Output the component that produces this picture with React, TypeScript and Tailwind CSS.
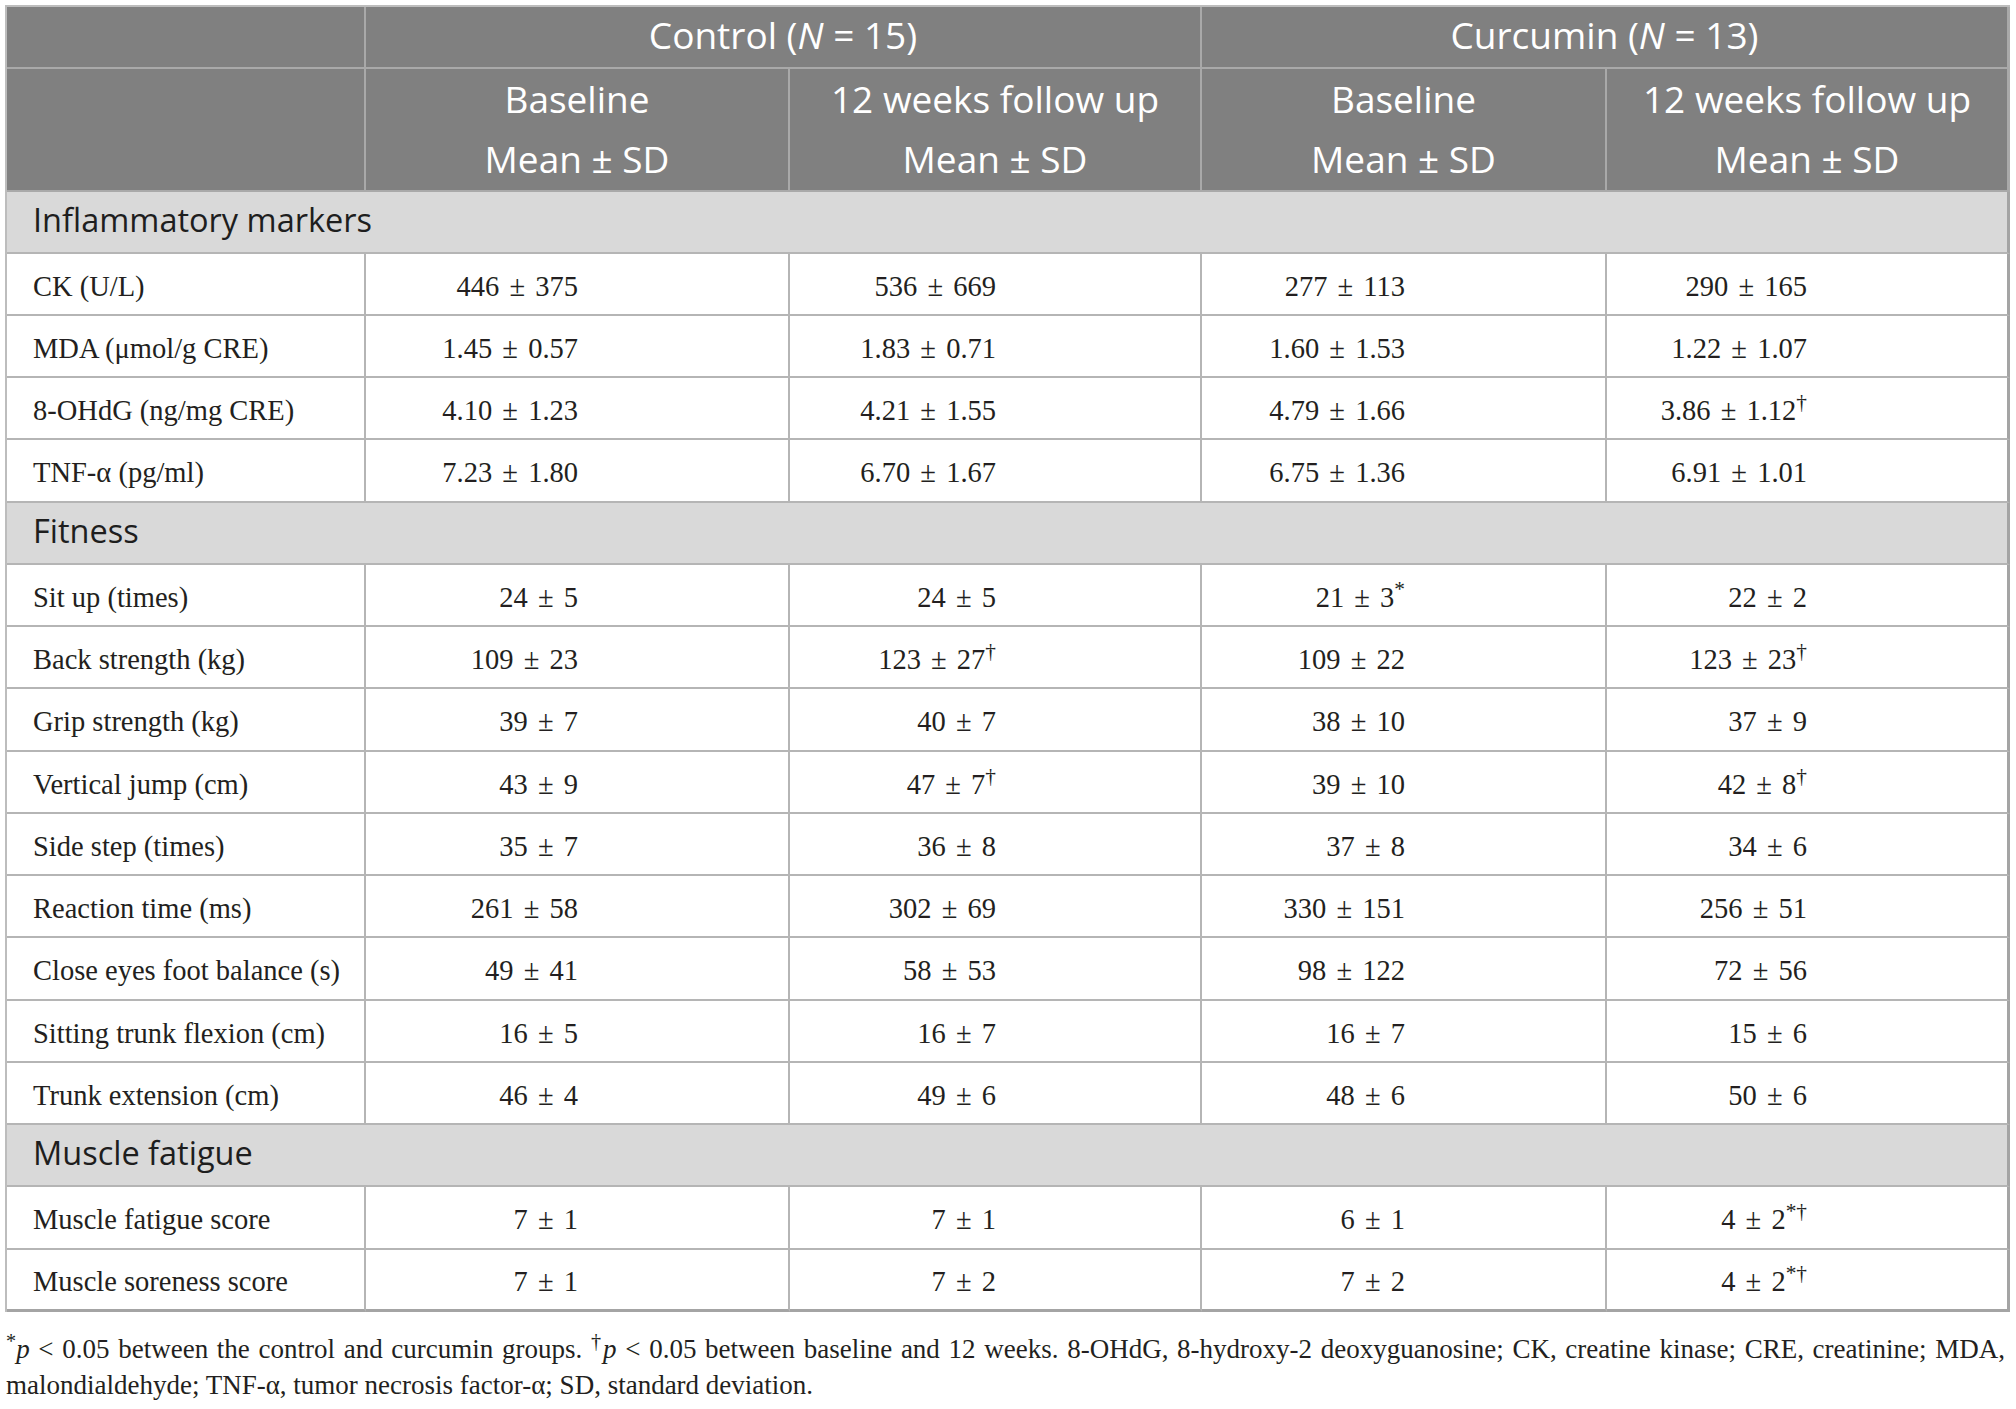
const SERIF = "font-['Liberation_Serif','Times_New_Roman',serif]";

type Row =
  | { kind: "section"; label: string }
  | { kind: "data"; label: string; values: string[]; marks?: string[] };

// value text is "a ± b"; the source's ± sits a touch wider than Times'
function Val({ text, mark }: { text: string; mark?: string }) {
  const [a, b] = text.split(" ± ");
  return (
    <>
      {a}
      <span className="mx-[3px]"> ± </span>
      {b}
      {mark && <sup>{mark}</sup>}
    </>
  );
}

const ROWS: Row[] = [
  { kind: "data", label: "CK (U/L)", values: ["446 ± 375", "536 ± 669", "277 ± 113", "290 ± 165"] },
  { kind: "data", label: "MDA (μmol/g CRE)", values: ["1.45 ± 0.57", "1.83 ± 0.71", "1.60 ± 1.53", "1.22 ± 1.07"] },
  { kind: "data", label: "8-OHdG (ng/mg CRE)", values: ["4.10 ± 1.23", "4.21 ± 1.55", "4.79 ± 1.66", "3.86 ± 1.12"], marks: ["", "", "", "†"] },
  { kind: "data", label: "TNF-α (pg/ml)", values: ["7.23 ± 1.80", "6.70 ± 1.67", "6.75 ± 1.36", "6.91 ± 1.01"] },
  { kind: "section", label: "Fitness" },
  { kind: "data", label: "Sit up (times)", values: ["24 ± 5", "24 ± 5", "21 ± 3", "22 ± 2"], marks: ["", "", "*", ""] },
  { kind: "data", label: "Back strength (kg)", values: ["109 ± 23", "123 ± 27", "109 ± 22", "123 ± 23"], marks: ["", "†", "", "†"] },
  { kind: "data", label: "Grip strength (kg)", values: ["39 ± 7", "40 ± 7", "38 ± 10", "37 ± 9"] },
  { kind: "data", label: "Vertical jump (cm)", values: ["43 ± 9", "47 ± 7", "39 ± 10", "42 ± 8"], marks: ["", "†", "", "†"] },
  { kind: "data", label: "Side step (times)", values: ["35 ± 7", "36 ± 8", "37 ± 8", "34 ± 6"] },
  { kind: "data", label: "Reaction time (ms)", values: ["261 ± 58", "302 ± 69", "330 ± 151", "256 ± 51"] },
  { kind: "data", label: "Close eyes foot balance (s)", values: ["49 ± 41", "58 ± 53", "98 ± 122", "72 ± 56"] },
  { kind: "data", label: "Sitting trunk flexion (cm)", values: ["16 ± 5", "16 ± 7", "16 ± 7", "15 ± 6"] },
  { kind: "data", label: "Trunk extension (cm)", values: ["46 ± 4", "49 ± 6", "48 ± 6", "50 ± 6"] },
  { kind: "section", label: "Muscle fatigue" },
  { kind: "data", label: "Muscle fatigue score", values: ["7 ± 1", "7 ± 1", "6 ± 1", "4 ± 2"], marks: ["", "", "", "*†"] },
  { kind: "data", label: "Muscle soreness score", values: ["7 ± 1", "7 ± 2", "7 ± 2", "4 ± 2"], marks: ["", "", "", "*†"] },
];

// rows sit ~62.24px apart in the source, so every fourth row gets the extra pixel
const HEIGHTS = ["h-[62px]", "h-[62px]", "h-[62px]", "h-[63px]"];

function ValueCell({ width, half, last, bottom, children }: { width: string; half: string; last?: boolean; bottom?: boolean; children: React.ReactNode }) {
  return (
    <div
      className={`${width} shrink-0 flex items-center pt-[6px] ${last ? "border-r-[3px] border-r-[#a4a4a4]" : "border-r-2 border-r-[#b5b5b5]"} ${bottom ? "border-b-[3px] border-b-[#a4a4a4]" : "border-b-2 border-b-[#b5b5b5]"}`}
    >
      <div className={`${half} text-right whitespace-nowrap`}>{children}</div>
    </div>
  );
}

export default function App() {
  return (
    <div className="bg-white min-h-[1409px] w-[2016px] pt-[5px] pl-[5px] text-[#231f20]">
      <div className="w-[2005px] border-l-2 border-t-2 border-[#bdbdbd]">
        {/* header */}
        <div className="bg-[#808080] text-white font-['Open_Sans',sans-serif] text-[37px]">
          <div className="flex h-[62px]">
            <div className="w-[359px] shrink-0 border-r-2 border-b-2 border-[#a9a9a9]" />
            <div className="w-[836px] shrink-0 border-r-2 border-b-2 border-[#a9a9a9] flex items-center justify-center pb-[4px]">
              <span>
                Control (<span className="italic">N</span> = 15)
              </span>
            </div>
            <div className="w-[808px] shrink-0 border-r-[3px] border-b-2 border-[#a9a9a9] flex items-center justify-center pb-[4px]">
              <span>
                Curcumin (<span className="italic">N</span> = 13)
              </span>
            </div>
          </div>
          <div className="flex h-[123px] leading-[60px] text-center">
            <div className="w-[359px] shrink-0 border-r-2 border-b-2 border-[#a9a9a9]" />
            <div className="w-[424px] shrink-0 border-r-2 border-b-2 border-[#a9a9a9]">
              <div>Baseline</div>
              <div>Mean ± SD</div>
            </div>
            <div className="w-[412px] shrink-0 border-r-2 border-b-2 border-[#a9a9a9]">
              <div>12 weeks follow up</div>
              <div>Mean ± SD</div>
            </div>
            <div className="w-[405px] shrink-0 border-r-2 border-b-2 border-[#a9a9a9]">
              <div>Baseline</div>
              <div>Mean ± SD</div>
            </div>
            <div className="w-[403px] shrink-0 border-r-[3px] border-b-2 border-[#a9a9a9]">
              <div>12 weeks follow up</div>
              <div>Mean ± SD</div>
            </div>
          </div>
        </div>

        <div className="h-[62px] bg-[#d9d9d9] border-b-2 border-r-[3px] border-b-[#b5b5b5] border-r-[#a4a4a4] flex items-center pl-[26px] pb-[3px] font-['Open_Sans',sans-serif] text-[32.5px] text-[#1e1e1e]">
          Inflammatory markers
        </div>

        {ROWS.map((row, i) => {
          const h = HEIGHTS[i % 4];
          const bottom = i === ROWS.length - 1;
          if (row.kind === "section") {
            return (
              <div
                key={row.label}
                className={`${h} bg-[#d9d9d9] border-b-2 border-r-[3px] border-b-[#b5b5b5] border-r-[#a4a4a4] flex items-center pl-[26px] pb-[3px] font-['Open_Sans',sans-serif] text-[32.5px] text-[#1e1e1e]`}
              >
                {row.label}
              </div>
            );
          }
          const m = row.marks ?? [];
          return (
            <div key={row.label} className={`flex ${h} ${SERIF} text-[28.5px]`}>
              <div
                className={`w-[359px] shrink-0 flex items-center pl-[26px] pt-[6px] border-r-2 border-r-[#b5b5b5] ${bottom ? "border-b-[3px] border-b-[#a4a4a4]" : "border-b-2 border-b-[#b5b5b5]"}`}
              >
                {row.label}
              </div>
              <ValueCell width="w-[424px]" half="w-[212px]" bottom={bottom}>
                <Val text={row.values[0]} mark={m[0]} />
              </ValueCell>
              <ValueCell width="w-[412px]" half="w-[206px]" bottom={bottom}>
                <Val text={row.values[1]} mark={m[1]} />
              </ValueCell>
              <ValueCell width="w-[405px]" half="w-[203px]" bottom={bottom}>
                <Val text={row.values[2]} mark={m[2]} />
              </ValueCell>
              <ValueCell width="w-[403px]" half="w-[200px]" last bottom={bottom}>
                <Val text={row.values[3]} mark={m[3]} />
              </ValueCell>
            </div>
          );
        })}
      </div>

      {/* footnote */}
      <div className={`${SERIF} text-[27px] leading-[36px] mt-[19px] pl-[1px] w-[2000px]`}>
        <div className="text-justify [text-align-last:justify]">
          <sup>*</sup>
          <span className="italic">p</span> &lt; 0.05 between the control and curcumin groups. <sup>†</sup>
          <span className="italic">p</span> &lt; 0.05 between baseline and 12 weeks. 8-OHdG, 8-hydroxy-2 deoxyguanosine; CK, creatine kinase;
          CRE, creatinine; MDA,
        </div>
        <div>malondialdehyde; TNF-α, tumor necrosis factor-α; SD, standard deviation.</div>
      </div>
    </div>
  );
}
